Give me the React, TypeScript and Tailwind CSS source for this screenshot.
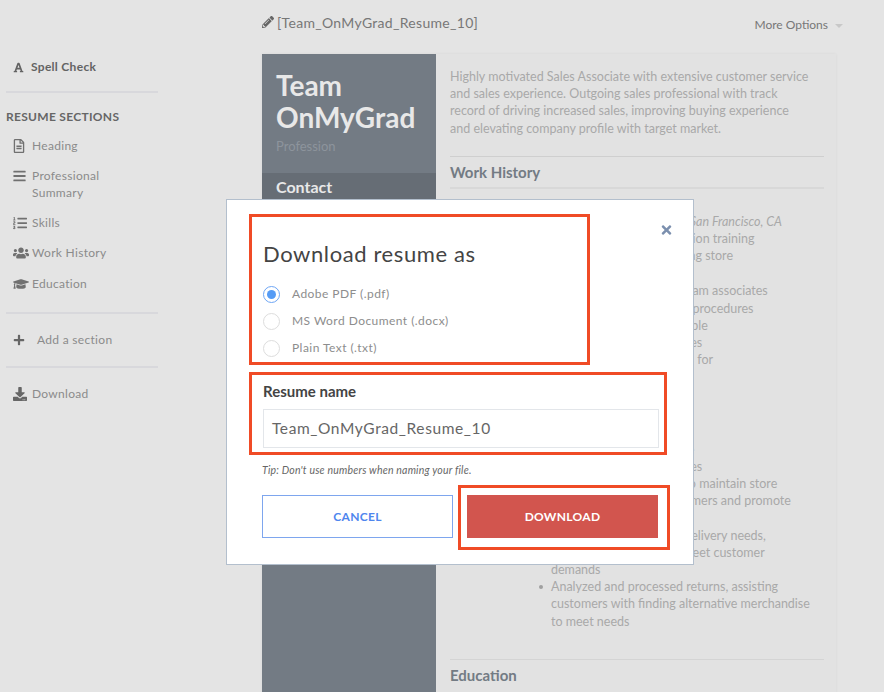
import { FaDownload, FaFileAlt, FaFont, FaBars, FaGraduationCap, FaListOl, FaPencilAlt, FaPlus, FaTimes, FaUsers, FaRegFileAlt } from "react-icons/fa";

const sections = [
  { label: "Heading", icon: <FaRegFileAlt className="w-[12px] h-[14px]" />, h: "h-[30px]" },
  { label: "Professional Summary", icon: <FaBars className="w-[13px] h-[14px]" />, h: "h-[47px]" },
  { label: "Skills", icon: <FaListOl className="w-[14px] h-[14px]" />, h: "h-[30px]" },
  { label: "Work History", icon: <FaUsers className="w-[16px] h-[14px]" />, h: "h-[31px]" },
  { label: "Education", icon: <FaGraduationCap className="w-[16px] h-[14px]" />, h: "h-[30px]" },
];

const formats = ["Adobe PDF (.pdf)", "MS Word Document (.docx)", "Plain Text (.txt)"];

function Sidebar() {
  return (
    <aside className="w-[262px] shrink-0 pl-[6px] pt-[56px] text-[#8b8b8b] text-[12px] tracking-[0.3px] font-['Lato',sans-serif]">
      <div className="w-[152px]">
        <div className="flex items-center h-[22px] pl-[7px] gap-[7px] text-[#636363] font-bold">
          <FaFont className="w-[11px] h-[11px]" />
          <span>Spell Check</span>
        </div>
        <div className="mt-[13px] h-[2px] bg-[#d8d8dc]" />
        <div className="mt-[16px] text-[#666] font-bold text-[12px] leading-[16px]">RESUME SECTIONS</div>
        <div className="mt-[6px]">
          {sections.map((s) => (
            <div key={s.label} className={`flex pl-[7px] ${s.h}`}>
              <span className="w-[19px] shrink-0 pt-[8px] text-[#707070] flex justify-start">{s.icon}</span>
              <span className="w-[90px] leading-[17px] pt-[6px]">{s.label}</span>
            </div>
          ))}
        </div>
        <div className="mt-[13px] h-[2px] bg-[#d8d8dc]" />
        <div className="flex items-center h-[52px] pl-[7px] gap-[12px]">
          <FaPlus className="w-[12px] h-[12px] text-[#666]" />
          <span>Add a section</span>
        </div>
        <div className="h-[2px] bg-[#d8d8dc]" />
        <div className="flex items-center h-[52px] pl-[7px] gap-[5px]">
          <FaDownload className="w-[14px] h-[14px] text-[#666]" />
          <span>Download</span>
        </div>
      </div>
    </aside>
  );
}

function ResumeText({ lines, className = "" }: { lines: string[]; className?: string }) {
  return (
    <div className={className}>
      {lines.map((l) => (
        <div key={l} className="whitespace-nowrap">{l}</div>
      ))}
    </div>
  );
}

function Resume() {
  return (
    <div className="flex w-[574px] h-[700px] bg-[#e2e2e2] shadow-[0_0_3px_rgba(0,0,0,0.06)] font-['Lato',sans-serif]">
      <div className="w-[174px] shrink-0 bg-[#737b84] text-[#e8e8e8]">
        <div className="px-[14px] pt-[15px] font-bold text-[28px] leading-[32px]">
          Team
          <br />
          OnMyGrad
        </div>
        <div className="px-[14px] mt-[3px] text-[13px] leading-[20px] text-[#8d949c]">Profession</div>
        <div className="mt-[17px] h-[40px] bg-[#666d75] px-[14px] pt-[4px] font-bold text-[16px] leading-[20px]">Contact</div>
      </div>
      <div className="flex-1 pl-[14px] pr-[12px] pt-[14px] text-[12.5px] leading-[17.2px] text-[#a9a9a9]">
        <ResumeText lines={[
          "Highly motivated Sales Associate with extensive customer service",
          "and sales experience. Outgoing sales professional with track",
          "record of driving increased sales, improving buying experience",
          "and elevating company profile with target market.",
        ]} />
        <div className="mt-[19px] h-px bg-[#cfcfcf]" />
        <div className="pt-[5px] h-[30px] font-bold text-[15px] leading-[20px] text-[#737b84]">Work History</div>
        <div className="h-[2px] bg-[#d8d8d8]" />
        <div className="mt-[24px] ml-[101px]">
          <div className="italic text-right pr-[42px]">San Francisco, CA</div>
          <ResumeText lines={["Implemented loss prevention training", "reducing theft and reducing store"]} />
          <ResumeText className="mt-[18px]" lines={[
            "Collaborated with sales team associates",
            "on selling techniques and procedures",
            "Kept floor clean, presentable",
            "to support continuous sales",
            "developed sales strategies for",
            "new opportunities and",
            "increased sales",
          ]} />
          <ResumeText className="mt-[38px]" lines={[
            "Kept the floor presentable",
            "to support continuous sales",
            "and replenished shelves to maintain store",
            "standards to attract customers and promote",
          ]} />
          <ResumeText className="mt-[17px]" lines={[
            "Coordinated supply and delivery needs,",
            "optimizing strategies to meet customer",
            "demands",
          ]} />
          <div className="relative">
            <span className="absolute left-[-12px] top-[7px] w-[4px] h-[4px] rounded-full bg-[#a0a0a0]" />
            <ResumeText lines={[
              "Analyzed and processed returns, assisting",
              "customers with finding alternative merchandise",
              "to meet needs",
            ]} />
          </div>
        </div>
        <div className="mt-[29px] h-px bg-[#d4d4d4]" />
        <div className="pt-[5px] font-bold text-[15px] leading-[20px] text-[#737b84]">Education</div>
      </div>
    </div>
  );
}

function DownloadModal() {
  return (
    <div className="absolute left-[226px] top-[199px] w-[468px] h-[366px] bg-white border border-[#b3bfcd] font-['Lato',sans-serif]">
      <FaTimes className="absolute right-[20px] top-[23px] w-[13px] h-[14px] text-[#7b8fae]" />
      <div className="ml-[22px] mt-[14px] w-[341px] h-[151px] border-[3px] border-[#f04b26] pl-[11px] pt-[22px]">
        <div className="text-[22px] leading-[30px] text-[#444] tracking-[0.6px]">Download resume as</div>
        <div className="mt-[16px] flex flex-col gap-[9px]">
          {formats.map((f, i) => (
            <label key={f} className="flex items-center h-[18px] text-[12px] tracking-[0.45px] text-[#8d8d8d]">
              <span className={`w-[17px] h-[17px] rounded-full border flex items-center justify-center ${i === 0 ? "border-[#6ea6f5]" : "border-[#ddd]"}`}>
                {i === 0 && <span className="w-[9px] h-[9px] rounded-full bg-[#559bf5]" />}
              </span>
              <span className="ml-[12px]">{f}</span>
            </label>
          ))}
        </div>
      </div>
      <div className="ml-[22px] mt-[7px] w-[418px] h-[83px] border-[3px] border-[#f04b26] pl-[11px] pr-[5px] pt-[6px]">
        <div className="font-bold text-[15px] leading-[20px] text-[#444]">Resume name</div>
        <div className="mt-[8px] h-[39px] border border-[#e3e6ea] flex items-center pl-[8px] text-[15.5px] tracking-[0.6px] text-[#666]">
          Team_OnMyGrad_Resume_10
        </div>
      </div>
      <div className="ml-[35px] mt-[8px] text-[10.5px] leading-[14px] italic text-[#666] tracking-[0.2px]">Tip: Don't use numbers when naming your file.</div>
      <div className="ml-[35px] mt-[12px] flex items-start">
        <button className="w-[191px] h-[43px] mt-[6px] border border-[#7ea6ee] text-[#4f86ee] text-[12px] font-bold tracking-[0.3px]">CANCEL</button>
        <div className="ml-[5px] -mt-[4px] w-[212px] h-[65px] border-[3px] border-[#f04b26] pl-[6px] pt-[7px]">
          <button className="w-[191px] h-[43px] bg-[#d2554e] text-white text-[12px] font-bold tracking-[0.3px]">DOWNLOAD</button>
        </div>
      </div>
    </div>
  );
}

export default function App() {
  return (
    <div className="relative flex w-[884px] h-[692px] overflow-hidden bg-[#e4e4e4]">
      <Sidebar />
      <main className="flex-1 min-w-0">
        <div className="flex justify-between h-[54px]">
          <div className="flex items-center h-[44px] gap-[3px] text-[14px] text-[#777] tracking-[0.3px] font-['Lato',sans-serif]">
            <FaPencilAlt className="w-[12px] h-[12px] text-[#666]" />
            [Team_OnMyGrad_Resume_10]
          </div>
          <div className="flex items-center h-[50px] pr-[41px] gap-[7px] text-[12px] text-[#777] font-['Lato',sans-serif]">
            More Options
            <span className="mt-[2px] border-x-[4px] border-t-[4px] border-x-transparent border-t-[#c8c8c8]" />
          </div>
        </div>
        <Resume />
      </main>
      <DownloadModal />
    </div>
  );
}
